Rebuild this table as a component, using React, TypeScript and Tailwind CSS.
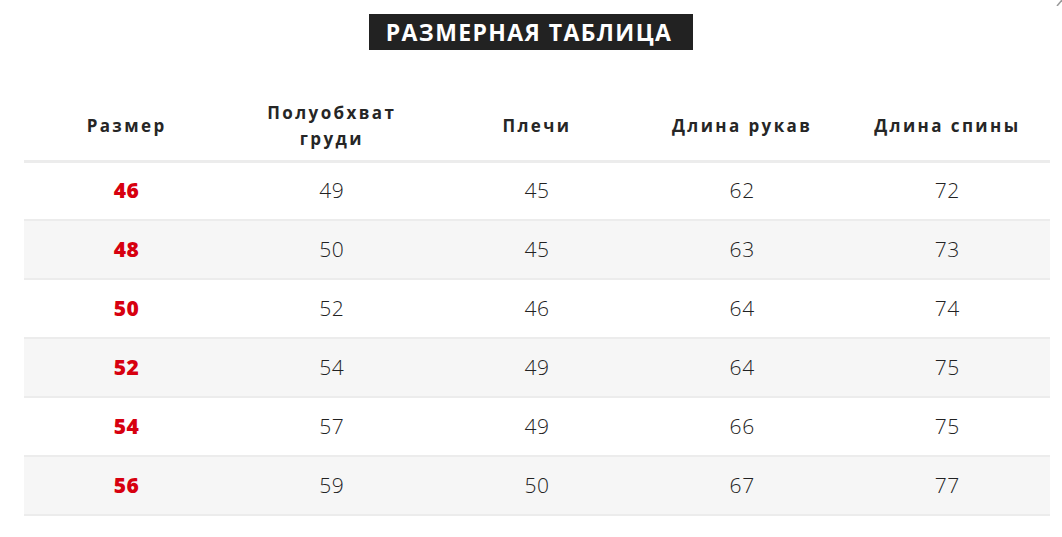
import React from 'react'

const HEADERS: React.ReactNode[] = [
  'Размер',
  <>Полуобхват<br />груди</>,
  'Плечи',
  'Длина рукав',
  'Длина спины',
]

const ROWS: [string, string, string, string, string][] = [
  ['46', '49', '45', '62', '72'],
  ['48', '50', '45', '63', '73'],
  ['50', '52', '46', '64', '74'],
  ['52', '54', '49', '64', '75'],
  ['54', '57', '49', '66', '75'],
  ['56', '59', '50', '67', '77'],
]

export default function App() {
  return (
    <div className="relative w-[1062px] h-[537px] bg-white font-['Open_Sans','Liberation_Sans',sans-serif] overflow-hidden">
      <div className="absolute right-0 top-0 w-[6px] h-[6px]">
        <svg width="6" height="6" viewBox="0 0 6 6"><line x1="1" y1="6" x2="6" y2="0" stroke="#999" strokeWidth="1.5" /></svg>
      </div>

      <div className="flex justify-center pt-[14px]">
        <h2 className="bg-[#222222] text-white font-bold uppercase text-[23px] leading-[36px] pl-[17px] pr-[21px] tracking-[1.4px]">
          Размерная таблица
        </h2>
      </div>

      <table className="ml-[24px] mt-[44px] w-[1026px] table-fixed border-collapse">
        <thead>
          <tr className="h-[67px] border-b-[3px] border-[#ececec]">
            {HEADERS.map((h, i) => (
              <th key={i} className="whitespace-nowrap text-[17px] leading-[26px] font-bold tracking-[2.4px] text-[#262626] px-[4px] pb-[2px]">
                {h}
              </th>
            ))}
          </tr>
        </thead>
        <tbody>
          {ROWS.map((r, i) => (
            <tr key={r[0]} className={`h-[59px] border-b-[2px] border-[#ececec] ${i % 2 === 1 ? 'bg-[#f6f6f6]' : 'bg-white'}`}>
              {r.map((v, j) => (
                <td
                  key={j}
                  className={
                    j === 0
                      ? 'text-center text-[21px] font-extrabold tracking-[0.6px] text-[#d7000f]'
                      : 'text-center text-[21px] font-light tracking-[0.6px] text-[#222222]'
                  }
                >
                  {v}
                </td>
              ))}
            </tr>
          ))}
        </tbody>
      </table>
    </div>
  )
}
